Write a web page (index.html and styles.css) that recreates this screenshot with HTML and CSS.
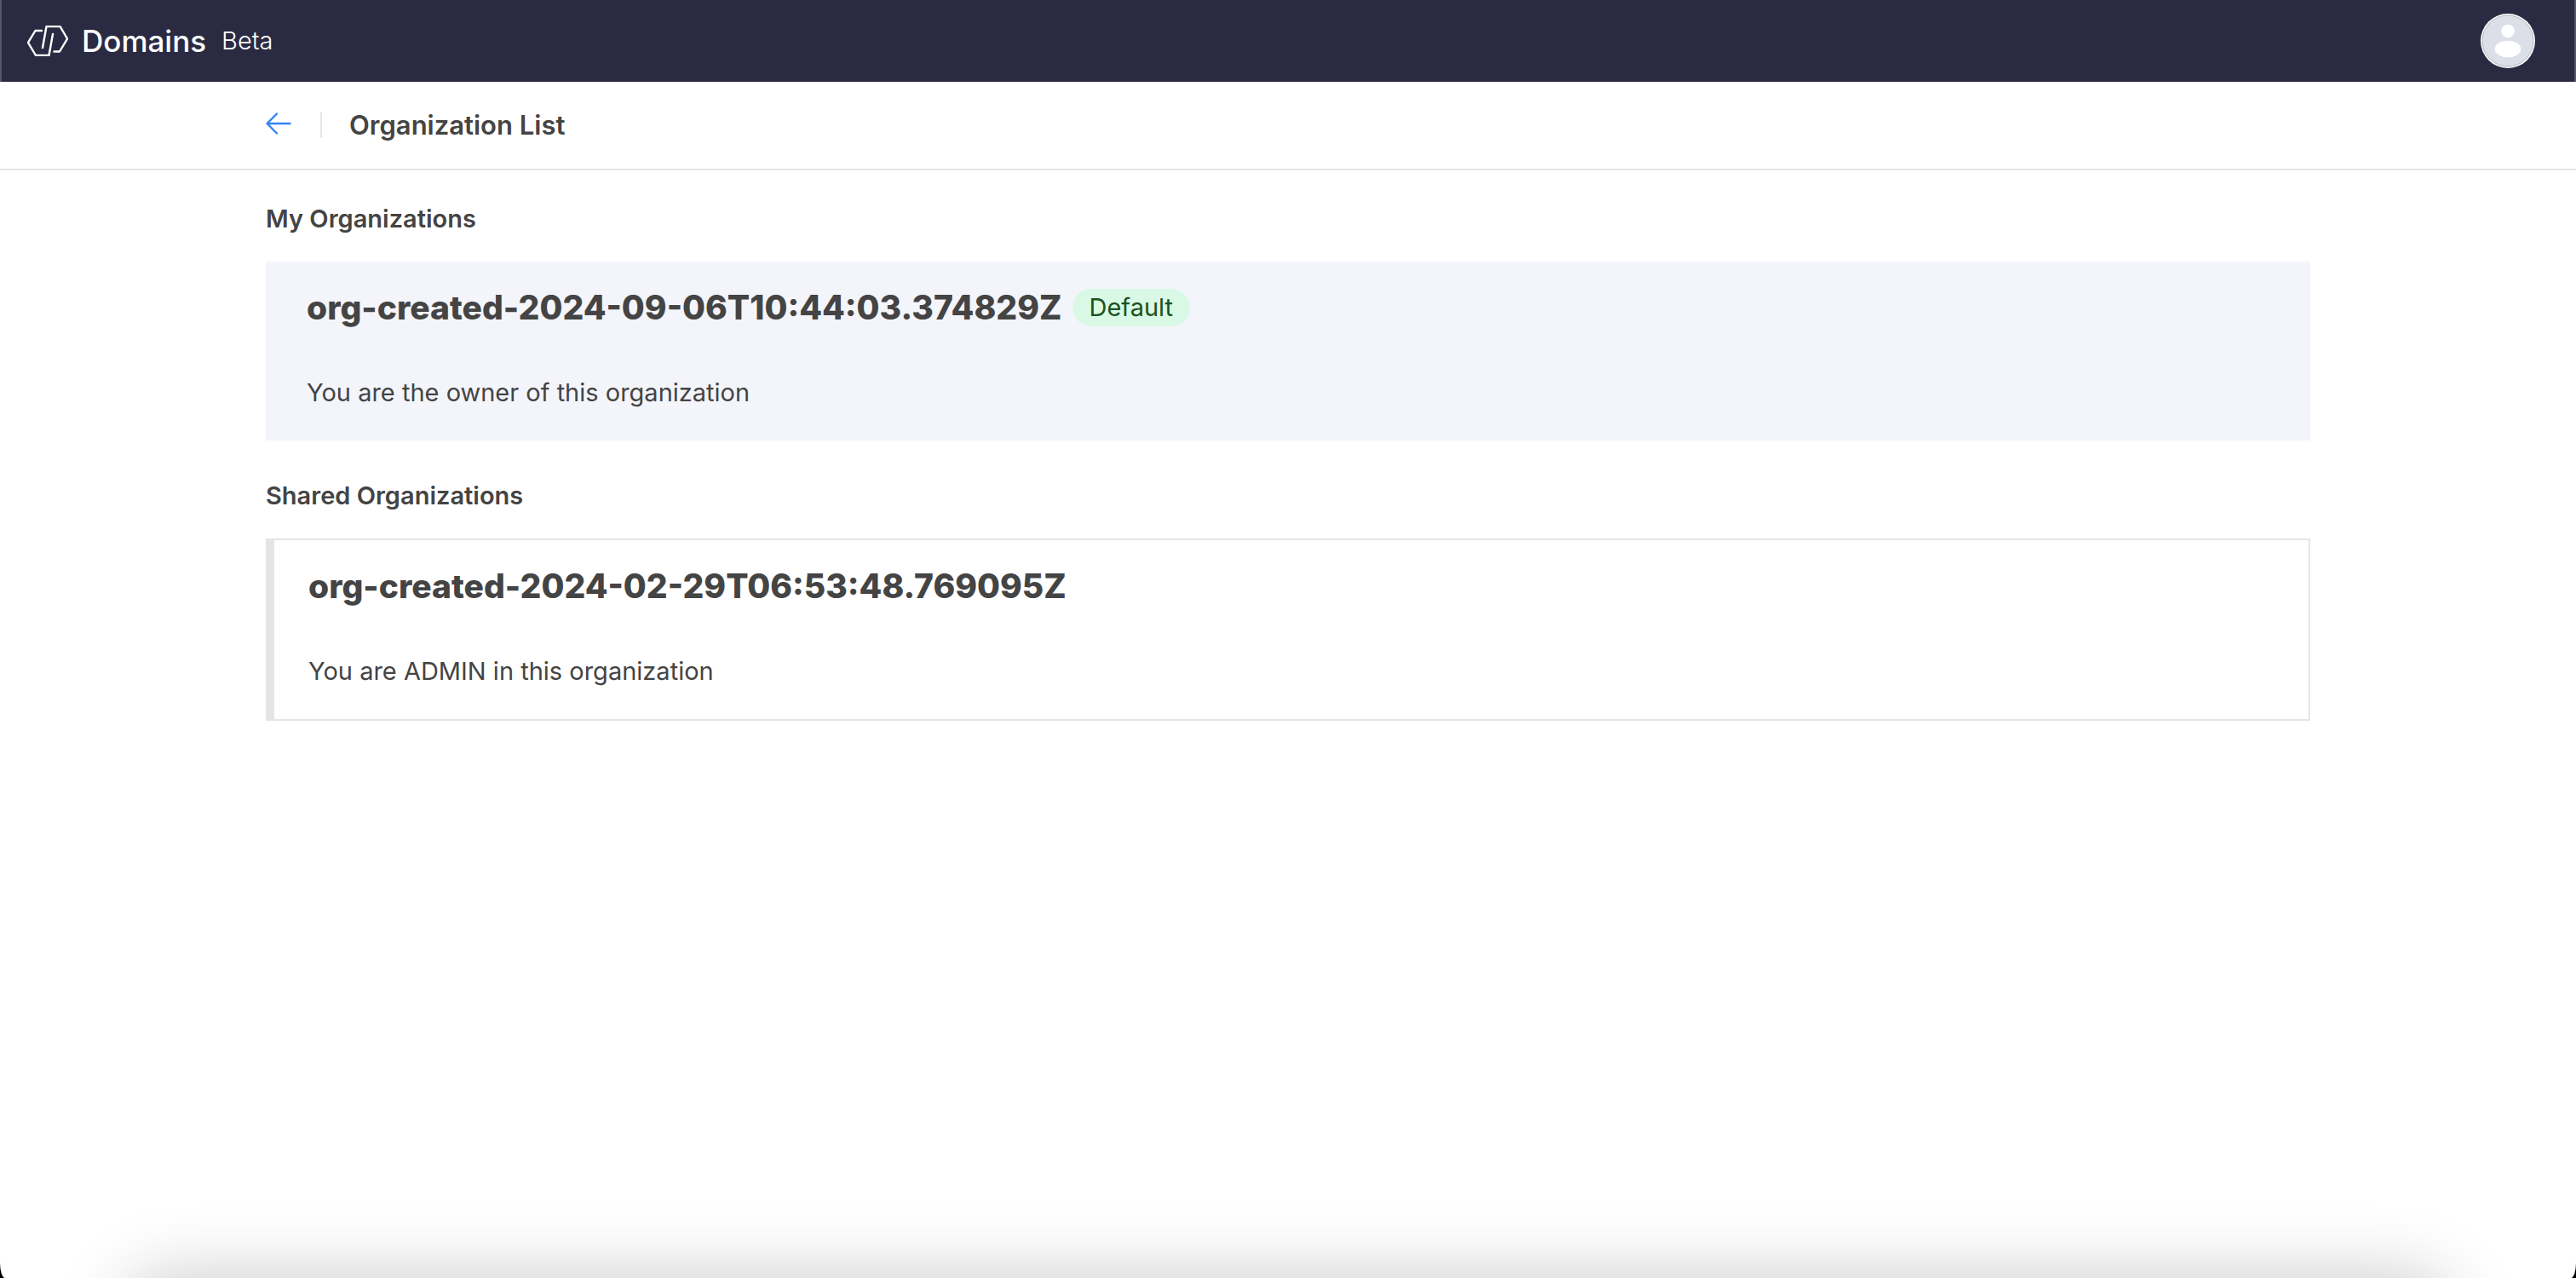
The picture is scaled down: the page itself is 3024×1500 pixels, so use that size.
FILE: index.html
```html
<!DOCTYPE html>
<html lang="en">
<head>
    <meta charset="UTF-8">
    <meta name="viewport" content="width=device-width, initial-scale=1.0">
    <title>Organization List - Domains</title>
    <link rel="stylesheet" href="styles.css">
</head>
<body>
    <div class="page">
        <header class="topbar">
            <a href="#" class="brand">
                <svg class="logo" viewBox="0 0 48 36" fill="none" stroke="#fff" stroke-width="2.400" stroke-linecap="round" stroke-linejoin="round">
                    <path d="M17 6H9.500L1 20L10 35H25.500L30 10"/>
                    <path d="M18 26L22.500 1H38.500L47 15.500L38 30.500H31.500"/>
                </svg>
                <span class="brand-name">Domains</span>
                <span class="brand-tag">Beta</span>
            </a>
            <button class="avatar" aria-label="Account">
                <svg viewBox="0 0 64 64">
                    <circle cx="32" cy="32" r="32" fill="#fff"/>
                    <circle cx="32" cy="32" r="30" fill="#dcdee8" stroke="#b4b6c0" stroke-width="1"/>
                    <circle cx="32" cy="20.500" r="7.800" fill="#fff"/>
                    <ellipse cx="32" cy="41.500" rx="15.300" ry="9.800" fill="#fff"/>
                </svg>
            </button>
        </header>

        <div class="subbar">
            <div class="container subbar-inner">
                <a href="#" class="back" aria-label="Back">
                    <svg viewBox="0 0 30 30" fill="none" stroke="#3384fb" stroke-width="2.400" stroke-linecap="round" stroke-linejoin="round">
                        <path d="M28.500 13H2M13 1.500L1.500 13L13 24.500"/>
                    </svg>
                </a>
                <h1>Organization List</h1>
            </div>
        </div>

        <main class="container">
            <section>
                <h2>My Organizations</h2>
                <div class="card card-own">
                    <div class="card-title">
                        <h3>org-created-2024-09-06T10:44:03.374829Z</h3>
                        <span class="badge">Default</span>
                    </div>
                    <p>You are the owner of this organization</p>
                </div>
            </section>
            <section>
                <h2>Shared Organizations</h2>
                <div class="card card-shared">
                    <div class="card-title">
                        <h3>org-created-2024-02-29T06:53:48.769095Z</h3>
                    </div>
                    <p>You are ADMIN in this organization</p>
                </div>
            </section>
        </main>
    </div>
</body>
</html>
```
FILE: styles.css
```css
* {
    box-sizing: border-box;
}
html {
    background-color: #000;
}
body {
    margin: 0;
    font-family: Inter, "Liberation Sans", sans-serif;
    font-size: 29px;
    line-height: 40px;
    color: #444;
}
h1, h2, h3, p {
    margin: 0;
}
.page {
    position: relative;
    min-height: 100vh;
    overflow: hidden;
    background-color: #fff;
    border-radius: 0 0 6px 6px / 0 0 18px 18px;
}
/* soft shadow along the bottom edge */
.page::after {
    content: "";
    position: absolute;
    left: 150px;
    right: 150px;
    top: 100%;
    height: 200px;
    border-radius: 40px;
    box-shadow: 0 0 84px rgba(0, 0, 0, 0.22);
}
.container {
    width: calc(100% - 48px);
    max-width: 2400px;
    margin: 0 auto;
}
.topbar {
    display: flex;
    align-items: center;
    justify-content: space-between;
    height: 96px;
    padding: 0 46px 0 30px;
    background-color: #2a2b42;
    border: solid #56576b;
    border-width: 0 2px;
}
.brand {
    display: flex;
    align-items: center;
    color: #fff;
    text-decoration: none;
}
.logo {
    width: 48px;
    height: 36px;
    margin-right: 16px;
}
.brand-name {
    font-size: 35px;
    font-weight: 500;
}
.brand-tag {
    margin-left: 18px;
    font-size: 29px;
    font-weight: 300;
}
.avatar {
    width: 64px;
    height: 64px;
    padding: 0;
    border: none;
    border-radius: 50%;
    background: none;
    cursor: pointer;
}
.avatar svg, .back svg, .logo {
    display: block;
}
.subbar {
    border-bottom: 2px solid #e5e5e5;
}
.subbar-inner {
    display: flex;
    align-items: center;
    height: 102px;
}
.back {
    width: 66px;
    padding-right: 34px;
    border-right: 2px solid #e5e5e5;
}
.back svg {
    width: 30px;
    height: 30px;
}
h1 {
    margin-left: 32px;
    font-size: 31px;
    font-weight: 600;
}
main {
    padding-top: 37px;
}
section {
    margin-bottom: 45px;
}
h2 {
    margin-bottom: 30px;
    font-size: 29px;
    font-weight: 600;
}
.card {
    padding: 30px 48px 36px;
}
.card-own {
    background-color: #f4f5fa;
}
.card-shared {
    padding-left: 40px;
    border: 2px solid #e5e5e5;
    border-left-width: 10px;
}
.card-title {
    display: flex;
    align-items: center;
    gap: 12px;
    margin-bottom: 56px;
}
h3 {
    font-size: 39px;
    line-height: 48px;
    font-weight: 800;
}
.badge {
    padding: 2px 20px;
    border-radius: 22px;
    background-color: #d9f9e6;
    color: #1b5320;
}
```
